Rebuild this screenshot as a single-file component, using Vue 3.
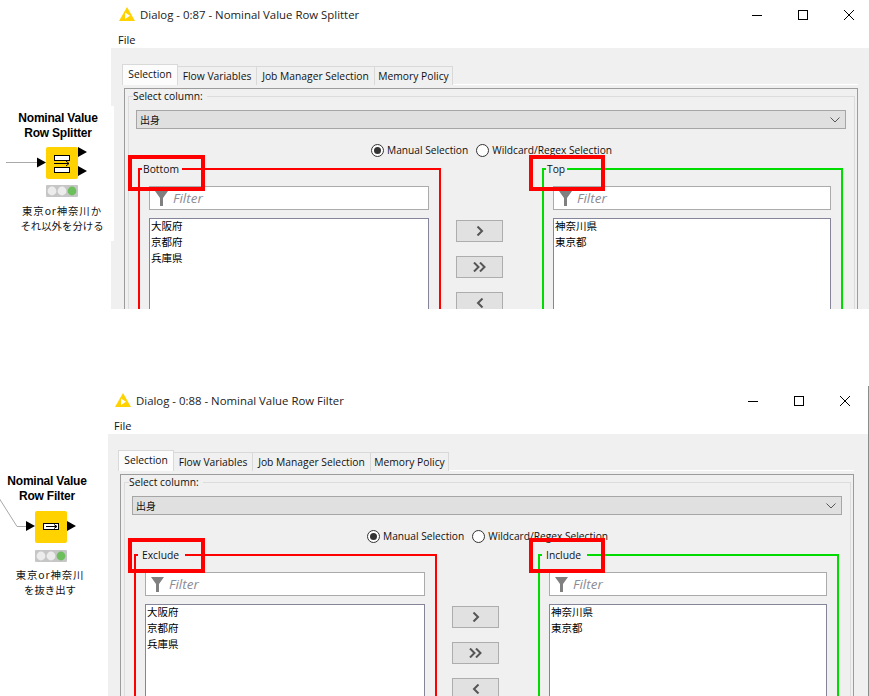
<script setup>
const shots = [
  {
    id: 'a',
    dialog: 'Dialog - 0:87 - Nominal Value Row Splitter',
    name: ['Nominal Value', 'Row Splitter'],
    note: ['東京or神奈川か', 'それ以外を分ける'],
    left: { title: 'Bottom', items: ['大阪府', '京都府', '兵庫県'] },
    right: { title: 'Top', items: ['神奈川県', '東京都'] }
  },
  {
    id: 'b',
    dialog: 'Dialog - 0:88 - Nominal Value Row Filter',
    name: ['Nominal Value', 'Row Filter'],
    note: ['東京or神奈川', 'を抜き出す'],
    left: { title: 'Exclude', items: ['大阪府', '京都府', '兵庫県'] },
    right: { title: 'Include', items: ['神奈川県', '東京都'] }
  }
]
const tabs = ['Selection', 'Flow Variables', 'Job Manager Selection', 'Memory Policy']
</script>

<template>
  <div class="page">
    <section v-for="shot in shots" :key="shot.id" class="shot" :class="'shot-' + shot.id">
      <div class="node-card">
        <div class="node-name">
          <div v-for="line in shot.name" :key="line">{{ line }}</div>
        </div>

        <svg v-if="shot.id === 'a'" class="node-icon" width="114" height="54" viewBox="0 0 114 54">
          <path d="M6 19.5H38" stroke="#a8a8a8" fill="none" />
          <path d="M37 14.5L46 19.5L37 24.5Z" fill="#000" />
          <rect x="46" y="4" width="32" height="32" rx="2" fill="#ffd200" />
          <path d="M78 4L87 9L78 14Z M78 23L87 28L78 33Z" fill="#000" />
          <rect x="54.5" y="12.5" width="15" height="5" fill="#fff" stroke="#000" />
          <rect x="54.5" y="24.5" width="15" height="5" fill="#fff" stroke="#000" />
          <path d="M54 20.5H69M66 18L69 20.5L66 23" fill="none" stroke="#000" />
          <rect x="46" y="42" width="32" height="12" rx="1" fill="#c6c6c6" />
          <circle cx="52" cy="48" r="4.4" fill="#ececec" />
          <circle cx="62" cy="48" r="4.4" fill="#ececec" />
          <circle cx="72" cy="48" r="4.4" fill="#6cbf5a" />
        </svg>

        <svg v-else class="node-icon" width="108" height="60" viewBox="0 0 108 60">
          <path d="M-1 -5L17 23.5H27" stroke="#a8a8a8" fill="none" />
          <path d="M26 18L35 23L26 28Z" fill="#000" />
          <rect x="35" y="8" width="32" height="32" rx="2" fill="#ffd200" />
          <path d="M67 18L76 23L67 28Z" fill="#000" />
          <rect x="43.5" y="20.5" width="15" height="6" fill="#fff" stroke="#000" />
          <path d="M46 23.5H57M54 21.5L57 23.5L54 25.5" fill="none" stroke="#000" />
          <rect x="35" y="47" width="32" height="12" rx="1" fill="#c6c6c6" />
          <circle cx="41" cy="53" r="4.4" fill="#ececec" />
          <circle cx="51" cy="53" r="4.4" fill="#ececec" />
          <circle cx="61" cy="53" r="4.4" fill="#6cbf5a" />
        </svg>

        <div class="node-note">
          <div v-for="line in shot.note" :key="line">{{ line }}</div>
        </div>
      </div>

      <div class="dialog">
        <header class="titlebar">
          <svg class="app-icon" width="16" height="14" viewBox="0 0 16 14">
            <path d="M8 0L16 14H0Z" fill="#ffd200" />
            <path d="M6 5.5V12L11 8.8Z" fill="#fff" />
          </svg>
          <span class="title-text">{{ shot.dialog }}</span>
          <div class="win-buttons">
            <svg width="10" height="10" viewBox="0 0 10 10"><path d="M0 5.5H10" stroke="#000" /></svg>
            <svg width="10" height="10" viewBox="0 0 10 10"><rect x="0.5" y="0.5" width="9" height="9" fill="none" stroke="#000" /></svg>
            <svg width="10" height="10" viewBox="0 0 10 10"><path d="M0 0L10 10M10 0L0 10" stroke="#000" /></svg>
          </div>
        </header>
        <div class="menubar">File</div>

        <div class="dialog-body">
          <div class="tabs">
            <div v-for="(tab, i) in tabs" :key="tab" class="tab" :class="{ active: i === 0 }">{{ tab }}</div>
            <div class="tab-rest"></div>
          </div>

          <div class="panel">
            <fieldset class="group-main">
              <legend>Select column:</legend>
              <div class="combo">
                <span>出身</span>
                <svg width="10" height="6" viewBox="0 0 10 6"><path d="M0.5 0.5L5 5L9.5 0.5" fill="none" stroke="#555" /></svg>
              </div>

              <div class="radios">
                <span class="radio checked"></span>
                <span class="radio-label">Manual Selection</span>
                <span class="radio"></span>
                <span class="radio-label">Wildcard/Regex Selection</span>
              </div>

              <div class="columns">
                <fieldset class="picker picker-red">
                  <legend>{{ shot.left.title }}</legend>
                  <div class="filter">
                    <svg width="13" height="15" viewBox="0 0 13 15"><path d="M0 0H13L8 7V15H5V7Z" fill="#808080" /></svg>
                    <span>Filter</span>
                  </div>
                  <ul class="list">
                    <li v-for="item in shot.left.items" :key="item">{{ item }}</li>
                  </ul>
                </fieldset>

                <div class="arrows">
                  <button class="arrow-btn">
                    <svg width="8" height="10" viewBox="0 0 8 10"><path d="M1.5 0.5L6 5L1.5 9.5" fill="none" stroke="#555" stroke-width="2" /></svg>
                  </button>
                  <button class="arrow-btn">
                    <svg width="13" height="10" viewBox="0 0 13 10"><path d="M1 0.5L5.5 5L1 9.5M7 0.5L11.5 5L7 9.5" fill="none" stroke="#555" stroke-width="2" /></svg>
                  </button>
                  <button class="arrow-btn">
                    <svg width="8" height="10" viewBox="0 0 8 10"><path d="M6.5 0.5L2 5L6.5 9.5" fill="none" stroke="#555" stroke-width="2" /></svg>
                  </button>
                </div>

                <fieldset class="picker picker-green">
                  <legend>{{ shot.right.title }}</legend>
                  <div class="filter">
                    <svg width="13" height="15" viewBox="0 0 13 15"><path d="M0 0H13L8 7V15H5V7Z" fill="#808080" /></svg>
                    <span>Filter</span>
                  </div>
                  <ul class="list">
                    <li v-for="item in shot.right.items" :key="item">{{ item }}</li>
                  </ul>
                </fieldset>
              </div>
            </fieldset>
          </div>
        </div>
      </div>

      <div class="mark mark-left"></div>
      <div class="mark mark-right"></div>
    </section>
  </div>
</template>

<style scoped>
.page {
  width: 869px;
  height: 696px;
  background: #fff;
  overflow: hidden;
  font-family: "Open Sans", "Noto Sans CJK JP", sans-serif;
  font-size: 10.3px;
  color: #111;
}
.shot {
  position: relative;
  display: flex;
  height: 309px;
  overflow: hidden;
}
.shot-b {
  height: 310px;
  margin-top: 77px;
}

/* node on the canvas */
.node-card {
  position: relative;
  z-index: 1;
  flex: none;
  box-sizing: border-box;
  width: 114px;
  height: 135px;
  margin: 106px -3px 0 0;
  padding-top: 5px;
  background: #fff;
}
.shot-b .node-card {
  width: 108px;
  height: 230px;
  margin: 0;
  padding-top: 88px;
  background: none;
}
.node-name {
  padding-left: 2px;
  font-family: "Liberation Sans", sans-serif;
  font-size: 12px;
  font-weight: 700;
  line-height: 14.5px;
  letter-spacing: -0.2px;
  text-align: center;
  color: #000;
}
.shot-b .node-name {
  padding: 0 14px 0 0;
}
.node-icon {
  display: block;
  margin-top: 3px;
  overflow: visible;
}
.shot-b .node-icon {
  margin-top: 0;
}
.node-note {
  margin-top: 6px;
  padding-left: 10px;
  font-family: "Noto Sans CJK JP", sans-serif;
  font-size: 10.4px;
  line-height: 15px;
  text-align: center;
  color: #111;
  white-space: nowrap;
}
.node-note div:first-child {
  letter-spacing: 0.9px;
}
.shot-b .node-note {
  margin-top: 5px;
  padding: 0 8px 0 0;
  line-height: 14.5px;
}

/* window */
.dialog {
  flex: 1;
  min-width: 0;
  display: flex;
  flex-direction: column;
}
.shot-b .dialog {
  border-right: 1px solid #8c8c8c;
}
.titlebar {
  flex: none;
  display: flex;
  align-items: center;
  height: 30px;
  padding: 0 15px 0 8px;
  background: #fff;
}
.shot-b .titlebar {
  padding: 0 18px 0 7px;
}
.app-icon {
  margin: -2px 5px 0 0;
}
.title-text {
  margin-top: -1px;
  font-size: 11.4px;
  color: #222;
  white-space: nowrap;
}
.win-buttons {
  display: flex;
  gap: 36px;
  margin-left: auto;
}
.menubar {
  flex: none;
  height: 18px;
  padding: 1px 0 0 7px;
  box-sizing: border-box;
  font-size: 11px;
  line-height: 18px;
}
.shot-b .menubar {
  padding-left: 6px;
}
.dialog-body {
  flex: 1;
  min-height: 0;
  padding: 16px 0 0 11px;
  background: #f0f0f0;
}
.shot-b .dialog-body {
  padding-left: 10px;
}

/* tabs */
.tabs {
  display: flex;
  align-items: flex-end;
  width: 736px;
  height: 21px;
}
.tab {
  box-sizing: border-box;
  flex: none;
  height: 19px;
  border: 1px solid #d9d9d9;
  border-bottom: none;
  border-left: none;
  line-height: 18px;
  text-align: center;
  white-space: nowrap;
  background: #f0f0f0;
}
.tab:nth-child(1) { width: 56px; }
.tab:nth-child(2) { width: 79px; }
.tab:nth-child(3) { width: 118px; }
.tab:nth-child(4) { width: 78px; }
.tab.active {
  height: 21px;
  border-left: 1px solid #d9d9d9;
  background: #fcfcfc;
  line-height: 19px;
}
.tab-rest {
  flex: 1;
  height: 1px;
  background: #fff;
}
.panel {
  box-sizing: border-box;
  width: 734px;
  height: 300px;
  margin: 3px 0 0 2px;
  padding: 0 2px 0 3px;
  border: 1px solid #9c9c9c;
}
fieldset {
  margin: 0;
  padding: 0;
  min-width: 0;
}
legend {
  padding: 0;
  height: 14px;
  line-height: 14px;
  white-space: nowrap;
}
.group-main {
  box-sizing: border-box;
  height: 290px;
  border: 1px solid #dcdcdc;
}
.group-main > legend {
  margin-left: 4px;
  padding: 0 4px 0 0;
}
.combo {
  box-sizing: border-box;
  display: flex;
  align-items: center;
  justify-content: space-between;
  height: 19px;
  margin: 7px 8px 0 7px;
  padding: 0 5px 0 3px;
  border: 1px solid #a6a6a6;
  background: #e0e0e0;
  font-family: "Noto Sans CJK JP", sans-serif;
  font-size: 10px;
}

/* radio row */
.radios {
  display: flex;
  align-items: center;
  justify-content: center;
  height: 16px;
  margin-top: 13px;
  font-size: 10.2px;
}
.radio {
  box-sizing: border-box;
  position: relative;
  width: 13px;
  height: 13px;
  margin-right: 3px;
  border: 1px solid #333;
  border-radius: 50%;
  background: #fff;
}
.radio.checked::after {
  content: "";
  position: absolute;
  inset: 2px;
  border-radius: 50%;
  background: #333;
}
.radio-label {
  margin-right: 8px;
  white-space: nowrap;
}
.radio-label:last-child {
  margin-right: 0;
}

/* two pickers with the arrow buttons between */
.columns {
  display: grid;
  grid-template-columns: 303px 101px 301px;
  margin: 4px 0 0 9px;
}
.picker {
  box-sizing: border-box;
  height: 220px;
  border-width: 2px;
  border-style: solid;
}
.picker-red {
  border-color: #f00;
}
.picker-green {
  border-color: #00dc00;
}
.picker legend {
  margin-left: 2px;
  padding: 0 3px 0 1px;
}
.picker-green legend {
  padding-right: 2px;
}
.shot-b .picker legend {
  padding: 0 6px 0 4px;
}
.filter {
  box-sizing: border-box;
  display: flex;
  align-items: center;
  height: 24px;
  margin: 10px 10px 0 9px;
  padding-left: 5px;
  border: 1px solid #ababab;
  background: #fff;
  font-size: 13.5px;
  font-style: italic;
  color: #8b8b96;
}
.filter svg {
  margin: 0 5px 0 0;
}
.list {
  box-sizing: border-box;
  height: 140px;
  margin: 8px 10px 0 9px;
  padding: 0 0 0 1px;
  list-style: none;
  border: 1px solid #85859a;
  background: #fff;
  font-family: "Noto Sans CJK JP", sans-serif;
  font-size: 10.5px;
  line-height: 16px;
  color: #000;
}
.list li:first-child {
  margin-top: -1px;
}
.arrows {
  display: flex;
  flex-direction: column;
  gap: 14px;
  padding: 58px 0 0 15px;
}
.arrow-btn {
  display: flex;
  align-items: center;
  justify-content: center;
  box-sizing: border-box;
  width: 47px;
  height: 22px;
  padding: 0;
  border: 1px solid #adadad;
  background: #e1e1e1;
}

/* red annotation boxes drawn over the screenshot */
.mark {
  position: absolute;
  z-index: 2;
  box-sizing: border-box;
  top: 155px;
  height: 36px;
  border: 4px solid #f00;
}
.shot-b .mark {
  top: 152px;
  height: 35px;
}
.mark-left {
  left: 128px;
  width: 77px;
}
.mark-right {
  left: 529px;
  width: 76px;
}
</style>
